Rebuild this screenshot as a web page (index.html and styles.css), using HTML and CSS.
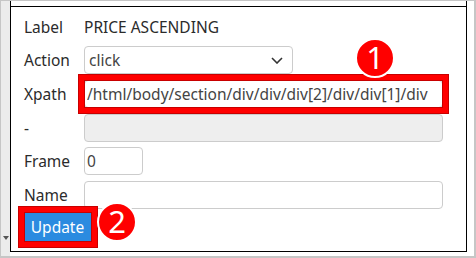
FILE: index.html
```html
<!DOCTYPE html>
<html lang="en">
<head>
    <meta charset="UTF-8">
    <title>Step editor</title>
    <link rel="stylesheet" href="styles.css">
</head>
<body>
    <div class="frame">
        <!-- scrollbar strip on the left -->
        <div class="gutter"><span class="arrow"></span></div>

        <div class="panel">
            <div class="cap"></div>
            <form class="editor">
                <div class="row">
                    <span class="label">Label</span>
                    <span class="value">PRICE ASCENDING</span>
                </div>
                <div class="row">
                    <span class="label">Action</span>
                    <div class="select">
                        <span>click</span>
                        <svg class="chevron" width="12" height="7" viewBox="0 0 12 7"><path d="M1 1l5 5 5-5" fill="none" stroke="#333" stroke-width="1.6"/></svg>
                    </div>
                </div>
                <div class="row">
                    <span class="label">Xpath</span>
                    <span class="mark">
                        <input class="field wide" type="text" value="/html/body/section/div/div/div[2]/div/div[1]/div">
                    </span>
                </div>
                <div class="row short">
                    <span class="label">-</span>
                    <input class="field wide" type="text" disabled>
                </div>
                <div class="row">
                    <span class="label">Frame</span>
                    <input class="field small" type="text" value="0">
                </div>
                <div class="row">
                    <span class="label">Name</span>
                    <input class="field wide" type="text">
                </div>
                <div class="row actions">
                    <span class="mark">
                        <button class="update" type="button">Update</button>
                    </span>
                </div>
            </form>
        </div>

        <!-- callout numbers -->
        <span class="badge one">1</span>
        <span class="badge two">2</span>
    </div>
</body>
</html>
```

FILE: styles.css
```css
* {
    margin: 0;
    padding: 0;
    box-sizing: border-box;
    font-family: 'Noto Sans', 'Open Sans', sans-serif;
}

body {
    background-color: #fff;
}

.frame {
    position: relative;
    display: flex;
    width: 476px;
    height: 258px;
    border: 1px solid #c6c6c6;
    border-right-width: 2px;
    border-bottom-width: 2px;
    background-color: #fff;
}

.gutter {
    width: 9px;
    background-color: #ececec;
    display: flex;
    flex-direction: column;
    justify-content: flex-end;
    align-items: center;
    padding-bottom: 16px;
}

.arrow {
    width: 0;
    height: 0;
    border-left: 3px solid transparent;
    border-right: 3px solid transparent;
    border-top: 4px solid #555;
}

.panel {
    width: 457px;
    height: 251px;
    border-left: 1px solid #000;
    border-right: 1px solid #000;
    display: flex;
    flex-direction: column;
}

.cap {
    height: 6px;
    border-bottom: 1px solid #000;
}

.editor {
    flex: 1;
    border-bottom: 1px solid #000;
    padding: 7px 22px 0 13px;
    display: flex;
    flex-direction: column;
    gap: 6px;
}

.row {
    display: flex;
    align-items: center;
    height: 28px;
}

.row:first-child {
    height: 26px;
}

.row.short {
    height: 27px;
}

.row.actions {
    height: 30px;
    margin-top: -3px;
}

.label {
    width: 60px;
    font-size: 15.5px;
    color: #2b2b2b;
}

.value {
    font-size: 15.5px;
    color: #2b2b2b;
}

.select {
    width: 209px;
    height: 28px;
    border: 1px solid #ccc;
    border-radius: 4px;
    display: flex;
    align-items: center;
    justify-content: space-between;
    padding: 0 9px 0 4px;
    font-size: 15.5px;
    color: #444;
}

.field {
    height: 28px;
    border: 1px solid #ccc;
    border-radius: 4px;
    padding: 0 2px;
    font-size: 15.5px;
    color: #444;
    background-color: #fff;
}

.field:disabled {
    background-color: #eee;
}

.wide {
    width: 359px;
}

.small {
    width: 59px;
}

/* red highlight box drawn over the element */
.mark {
    position: relative;
    display: flex;
}

.mark::after {
    content: "";
    position: absolute;
    top: -5px;
    left: -5px;
    right: -5px;
    bottom: -5px;
    border: 5px solid #f00;
    box-shadow: 0 0 0 1px #c80000, inset 0 0 0 1px #c80000;
    pointer-events: none;
}

.update {
    width: 69px;
    height: 30px;
    margin-left: -1px;
    border: none;
    background-color: #2b8be0;
    color: #fff;
    font-size: 15.5px;
}

.badge {
    position: absolute;
    width: 40px;
    height: 40px;
    border-radius: 50%;
    border: 2px solid #fff;
    background-color: #f00;
    color: #fff;
    font-size: 31px;
    line-height: 35px;
    text-align: center;
}

.badge.one {
    left: 354px;
    top: 37px;
}

.badge.two {
    left: 96px;
    top: 201px;
}
```
